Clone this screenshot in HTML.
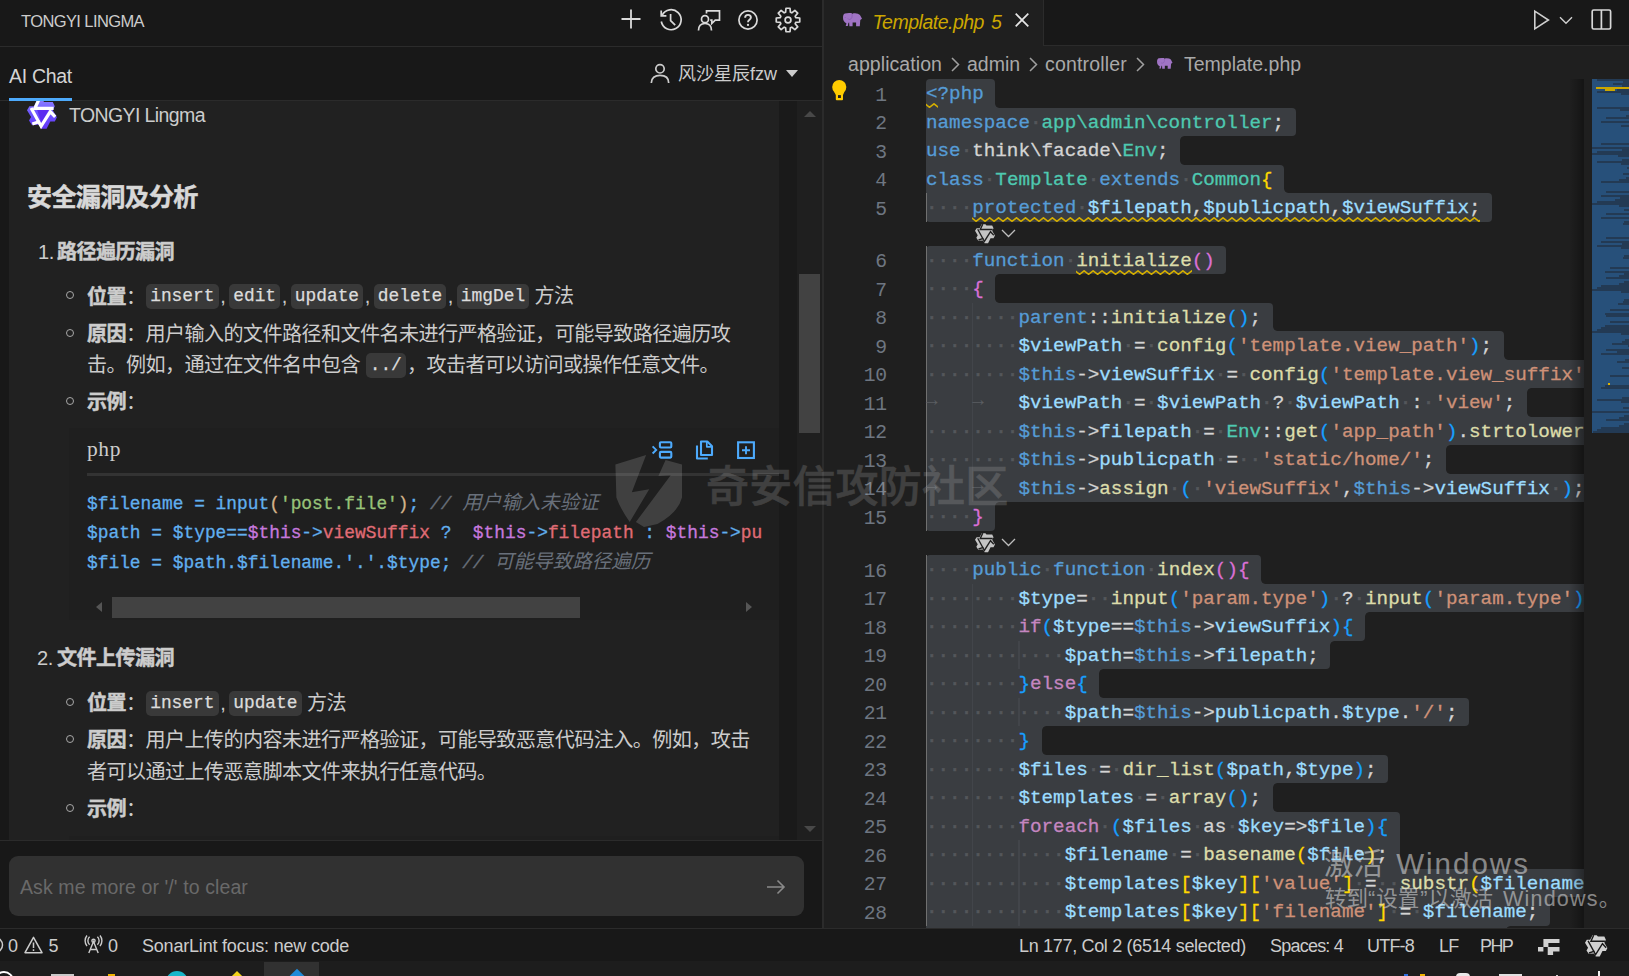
<!DOCTYPE html>
<html lang="zh-CN"><head><meta charset="utf-8"><title>Template.php - TONGYI Lingma</title>
<style>
*{box-sizing:border-box;margin:0;padding:0}
html,body{width:1629px;height:976px;overflow:hidden;background:#181818}
body{position:relative;font-family:"Liberation Sans","Noto Sans CJK SC",sans-serif;color:#cccccc;font-size:19.5px}
.abs{position:absolute}
.t{position:absolute;white-space:pre;line-height:1}
.mono{font-family:"Liberation Mono","DejaVu Sans Mono",monospace}
svg{position:absolute;overflow:visible}
/* left */
#left{position:absolute;left:0;top:0;width:822px;height:928px;background:#181818;overflow:hidden}
#chat{position:absolute;left:9px;top:101px;width:770px;height:739px;background:#212121;overflow:hidden}
#chat .t{color:#cccccc}
.b,#chat b{font-weight:bold;-webkit-text-stroke:0.45px currentColor}
.cj{font-family:"Liberation Sans","Noto Sans CJK SC",sans-serif;font-size:19.5px;-webkit-text-stroke:0;line-height:0}
.ic{position:absolute;background:#393939;border-radius:5px;height:25px;font-family:"Liberation Mono",monospace;font-size:17.87px;line-height:25px;padding:0 4.2px;white-space:pre;color:#dcdcdc;-webkit-text-stroke:0.25px currentColor}
.bul{position:absolute;width:8px;height:8px;border:1.1px solid #a8a8a8;border-radius:50%}
.cl{position:absolute;left:78px;white-space:pre;-webkit-text-stroke:0.3px currentColor;font-family:"Liberation Mono",monospace;font-size:17.87px;line-height:29.4px;height:29.4px}
/* editor */
#ed{position:absolute;left:824px;top:0;width:805px;height:928px;background:#1f1f1f;overflow:hidden}
#code{position:absolute;left:0;top:0;width:759.5px;height:928px;overflow:hidden}
.ln{position:absolute;left:0;width:62.8px;text-align:right;font-family:"Liberation Mono",monospace;font-size:19.7px;letter-spacing:-0.3px;line-height:28.5px;height:28.5px;color:#6e7681}
.row{position:absolute;left:102px;white-space:pre;-webkit-text-stroke:0.3px currentColor;font-family:"Liberation Mono",monospace;font-size:19.25px;line-height:28.5px;height:28.5px;color:#d4d4d4}
.sel{position:absolute;left:102px;height:28.5px;background:#3a3d41}
.ws{color:#54575b;-webkit-text-stroke:0.6px #54575b;position:relative;top:0}
.wa{color:#5b5e62;-webkit-text-stroke:0;position:relative;top:-2.5px}
.k{color:#569cd6}.c{color:#c586c0}.v{color:#9cdcfe}.s{color:#ce9178}.f{color:#dcdcaa}.y{color:#4ec9b0}
.b1{color:#ffd700}.b2{color:#da70d6}.b3{color:#179fff}
.sq{text-decoration:underline wavy #cca700 1.3px;text-underline-offset:4.5px;text-decoration-skip-ink:none}
.g{position:absolute;width:1.5px;background:#404040}
/* status */
#status{position:absolute;left:0;top:928px;width:1629px;height:34px;background:#181818;border-top:1px solid #2b2b2b;font-size:18px}
#status .t{color:#cccccc;top:7.6px}
#task{position:absolute;left:0;top:961px;width:1629px;height:15px;background:#1d1d1d;overflow:hidden}
</style></head>
<body>
<div id="left">
<div class="t " style="left:21px;top:12.5px;font-size:16.5px;letter-spacing:-0.6px;color:#cccccc">TONGYI LINGMA</div>
<svg style="left:619px;top:7.300000000000001px" width="24" height="24" viewBox="0 0 24 24"><path d="M12 2.5v19M2.5 12h19" stroke="#dadada" stroke-width="1.8" fill="none"/></svg>
<svg style="left:659px;top:8.3px" width="24" height="24" viewBox="0 0 24 24" fill="none" stroke="#dadada" stroke-width="1.7"><path d="M3.2 7.2A10 10 0 1 1 2.3 13.5"/><path d="M2.2 2.6v5.2h5.2"/><path d="M11.6 6v6.6l4.6 4.6"/></svg>
<svg style="left:697px;top:7.699999999999999px" width="24" height="24" viewBox="0 0 24 24" fill="none" stroke="#dadada" stroke-width="1.7"><path d="M9.5 5.5V2.8h13v9.4h-4.3l-3.4 3.3v-3.3h-1.6"/><circle cx="8" cy="11.2" r="3.5"/><path d="M1.5 22.5c0-4.6 2.6-7 6.5-7s6.5 2.4 6.5 7"/></svg>
<svg style="left:736px;top:7.600000000000001px" width="24" height="24" viewBox="0 0 24 24" fill="none" stroke="#dadada" stroke-width="1.7"><circle cx="12" cy="12" r="9.1"/><path d="M9.1 9.8c0-1.8 1.2-2.9 2.9-2.9s2.900 1.100 2.900 2.700c0 2.200-2.900 2.300-2.900 4.600" stroke-width="1.9"/><circle cx="12" cy="16.9" r="1.15" fill="#dadada" stroke="none"/></svg>
<svg style="left:776px;top:8px" width="24" height="24" viewBox="0 0 24 24" fill="none" stroke="#dadada" stroke-width="1.7" stroke-linejoin="round"><path d="M9.61 4.26 L9.99 0.27 L14.01 0.27 L14.39 4.26 L15.78 4.84 L18.87 2.28 L21.72 5.13 L19.16 8.22 L19.74 9.61 L23.73 9.99 L23.73 14.01 L19.74 14.39 L19.16 15.78 L21.72 18.87 L18.87 21.72 L15.78 19.16 L14.39 19.74 L14.01 23.73 L9.99 23.73 L9.61 19.74 L8.22 19.16 L5.13 21.72 L2.28 18.87 L4.84 15.78 L4.26 14.39 L0.27 14.01 L0.27 9.99 L4.26 9.61 L4.84 8.22 L2.28 5.13 L5.13 2.28 L8.22 4.84Z"/><circle cx="12" cy="12" r="2.9"/></svg>
<div class="abs" style="left:0;top:46px;width:822px;height:1px;background:#2b2b2b"></div>
<div class="t " style="left:9px;top:66.7px;letter-spacing:-0.3px;color:#d4d4d4">AI Chat</div>
<div class="abs" style="left:0;top:100px;width:822px;height:1px;background:#2b2b2b"></div>
<div class="abs" style="left:9px;top:98px;width:63px;height:3px;background:#4daafc"></div>
<svg style="left:649px;top:62px" width="22" height="22" viewBox="0 0 22 22" fill="none" stroke="#cccccc" stroke-width="1.7"><circle cx="11" cy="6.8" r="4.2"/><path d="M2.3 21c0-5.2 3.6-7.6 8.7-7.6s8.700 2.400 8.700 7.600"/></svg>
<div class="t " style="left:678px;top:65.4px;font-size:18px;color:#cccccc">风沙星辰fzw</div>
<div class="abs" style="left:786px;top:70px;width:0;height:0;border-left:6px solid transparent;border-right:6px solid transparent;border-top:7px solid #cccccc"></div>
<div class="abs" style="left:779px;top:101px;width:18px;height:739px;background:#1a1a1a"></div>
<div class="abs" style="left:797px;top:101px;width:25px;height:739px;background:#1f1f1f"></div>
<div class="abs" style="left:799px;top:274px;width:21px;height:159px;background:#424242"></div>
<div class="abs" style="left:803.5px;top:111px;width:0;height:0;border-left:6px solid transparent;border-right:6px solid transparent;border-bottom:6px solid #484848"></div>
<div class="abs" style="left:803.5px;top:826px;width:0;height:0;border-left:6px solid transparent;border-right:6px solid transparent;border-top:6px solid #484848"></div>
<div id="chat">
<svg style="left:18px;top:-1px" width="30" height="29.00" viewBox="0 0 30 29"><defs><linearGradient id="lg" x1="0" y1="0" x2="0" y2="1"><stop offset="0" stop-color="#8a7dff"/><stop offset=".45" stop-color="#6d55ff"/><stop offset="1" stop-color="#6236f5"/></linearGradient></defs><path d="M10.0 0.2L15.6 0.2L17.2 2.1L25.8 2.1L27.8 6.2L25.8 10.3L29.9 17.3L27.8 21.4L23.3 21.4L19.6 28.8L14.3 28.8L12.3 24.7L4.9 25.1L2.0 20.6L4.1 16.9L0 10.3L2.4 6.2L6.9 6.2Z" fill="url(#lg)"/><path d="M10 9.5L22 9.5L14.4 22.500Z" fill="#5b2cf0"/><path d="M11.6 0.2L7.9 8.3L26.6 8.3" stroke="#ffffff" stroke-width="3.2" fill="none" stroke-linejoin="miter"/><path d="M4.1 7.9L14.1 26.2L23.3 11.6L28.2 16.9" stroke="#ffffff" stroke-width="3.2" fill="none" stroke-linejoin="miter"/><path d="M5.3 24.0L12.6 21.6" stroke="#ffffff" stroke-width="3.2" fill="none" stroke-linejoin="miter"/></svg>
<div class="t " style="left:60px;top:4.799999999999997px;letter-spacing:-0.6px;color:#cccccc">TONGYI Lingma</div>
<div class="t b" style="left:18px;top:83.834px;font-size:25.13px;letter-spacing:-0.732px;color:#d8d8d8">安全漏洞及分析</div>
<div class="t " style="left:29px;top:141.0575px;font-size:20.09px;letter-spacing:-0.585px;letter-spacing:-0.5px">1.</div>
<div class="t b" style="left:48px;top:141.0575px;font-size:20.09px;letter-spacing:-0.585px;">路径遍历漏洞</div>
<div class="bul" style="left:56.5px;top:189.60000000000002px"></div>
<div class="t " style="left:78px;top:185.55749999999995px;font-size:20.09px;letter-spacing:-0.585px;"><b>位置</b>：</div>
<span class="ic" style="left:137px;top:182.5px">insert</span>
<div class="t " style="left:211.22000000000003px;top:184.85749999999996px;font-size:20.09px;letter-spacing:-0.585px;">,</div>
<span class="ic" style="left:220.02px;top:182.5px">edit</span>
<div class="t " style="left:272.8px;top:184.85749999999996px;font-size:20.09px;letter-spacing:-0.585px;">,</div>
<span class="ic" style="left:281.6px;top:182.5px">update</span>
<div class="t " style="left:355.82000000000005px;top:184.85749999999996px;font-size:20.09px;letter-spacing:-0.585px;">,</div>
<span class="ic" style="left:364.62px;top:182.5px">delete</span>
<div class="t " style="left:438.84000000000003px;top:184.85749999999996px;font-size:20.09px;letter-spacing:-0.585px;">,</div>
<span class="ic" style="left:447.64px;top:182.5px">imgDel</span>
<div class="t " style="left:525.5px;top:184.85749999999996px;font-size:20.09px;letter-spacing:-0.585px;">方法</div>
<div class="bul" style="left:56.5px;top:227.60000000000002px"></div>
<div class="t " style="left:78px;top:223.25749999999994px;font-size:20.09px;letter-spacing:-0.585px;"><b>原因</b>：用户输入的文件路径和文件名未进行严格验证，可能导致路径遍历攻</div>
<div class="t " style="left:78px;top:254.45749999999998px;font-size:20.09px;letter-spacing:-0.585px;">击。例如，通过在文件名中包含</div>
<span class="ic" style="left:356.5px;top:252px">../</span>
<div class="t " style="left:398px;top:254.45749999999998px;font-size:20.09px;letter-spacing:-0.585px;">，攻击者可以访问或操作任意文件。</div>
<div class="bul" style="left:56.5px;top:295.6px"></div>
<div class="t " style="left:78px;top:291.05749999999995px;font-size:20.09px;letter-spacing:-0.585px;"><b>示例</b>：</div>
<div class="abs" style="left:60px;top:327px;width:710px;height:192px;background:#1f1f1f">
<div class="t" style="left:18px;top:11px;font-family:'Liberation Serif',serif;font-size:21.5px;letter-spacing:0.6px;color:#cccccc">php</div>
<div class="abs" style="left:18px;top:45px;width:692px;height:2.5px;background:#333333"></div>
<svg style="left:0;top:0" width="710" height="60" viewBox="69 428 710 60" fill="none" stroke="#4daafc" stroke-width="2.1" stroke-linejoin="round"><path d="M652.6 446.3l3.600 3.600-3.600 3.600" stroke-width="1.900" stroke-linejoin="miter"/><rect x="659.900" y="442.300" width="11.400" height="5.200" rx="1"/><rect x="659.900" y="451.900" width="11.400" height="5.700" rx="1"/><path d="M701 441.500h6.300l4.700 4.700v8.800h-11z"/><path d="M706.800 441.800v5h5" stroke-width="1.700"/><path d="M697 445.500v13h10.800"/><rect x="738.100" y="442.300" width="15.800" height="15.700" stroke-linejoin="miter"/><path d="M746 446.200v8M742 450.200h8" stroke-width="1.900"/></svg>
<div class="abs" style="left:18px;top:61.8px;width:676px;height:100px;overflow:hidden">
<div class="cl" style="left:0;top:0.0px"><span style="color:#61afef">$filename = input</span><span style="color:#d4b38a">(</span><span style="color:#98c379">'post.file'</span><span style="color:#d4b38a">)</span><span style="color:#61afef">;</span> <span style="color:#686f7a;font-style:italic">// <span class="cj">用户输入未验证</span></span></div>
<div class="cl" style="left:0;top:29.4px"><span style="color:#61afef">$path = $type==</span><span style="color:#c678dd">$this</span><span style="color:#61afef">-&gt;</span><span style="color:#e06c75">viewSuffix</span><span style="color:#61afef"> ?  </span><span style="color:#c678dd">$this</span><span style="color:#61afef">-&gt;</span><span style="color:#e06c75">filepath</span><span style="color:#61afef"> : </span><span style="color:#c678dd">$this</span><span style="color:#61afef">-&gt;</span><span style="color:#e06c75">publicpath</span><span style="color:#61afef">.$type.'/';</span></div>
<div class="cl" style="left:0;top:58.8px"><span style="color:#61afef">$file = $path.$filename.'.'.$type;</span> <span style="color:#686f7a;font-style:italic">// <span class="cj">可能导致路径遍历</span></span></div>
</div>
<div class="abs" style="left:43px;top:169px;width:468px;height:21px;background:#424242"></div>
<div class="abs" style="left:27px;top:174px;width:0;height:0;border-top:5.5px solid transparent;border-bottom:5.500px solid transparent;border-right:6px solid #555"></div>
<div class="abs" style="left:677px;top:174px;width:0;height:0;border-top:5.5px solid transparent;border-bottom:5.500px solid transparent;border-left:6px solid #555"></div>
</div>
<div class="t " style="left:28px;top:546.8575px;font-size:20.09px;letter-spacing:-0.585px;letter-spacing:-0.5px">2.</div>
<div class="t b" style="left:48px;top:546.8575px;font-size:20.09px;letter-spacing:-0.585px;">文件上传漏洞</div>
<div class="bul" style="left:56.5px;top:596.6px"></div>
<div class="t " style="left:78px;top:591.8575px;font-size:20.09px;letter-spacing:-0.585px;"><b>位置</b>：</div>
<span class="ic" style="left:137px;top:589.5px">insert</span>
<div class="t " style="left:211.22000000000003px;top:591.8575px;font-size:20.09px;letter-spacing:-0.585px;">,</div>
<span class="ic" style="left:220.02px;top:589.5px">update</span>
<div class="t " style="left:298px;top:591.8575px;font-size:20.09px;letter-spacing:-0.585px;">方法</div>
<div class="bul" style="left:56.5px;top:633.6px"></div>
<div class="t " style="left:78px;top:629.2574999999999px;font-size:20.09px;letter-spacing:-0.585px;"><b>原因</b>：用户上传的内容未进行严格验证，可能导致恶意代码注入。例如，攻击</div>
<div class="t " style="left:78px;top:660.6574999999999px;font-size:20.09px;letter-spacing:-0.585px;">者可以通过上传恶意脚本文件来执行任意代码。</div>
<div class="bul" style="left:56.5px;top:702.6px"></div>
<div class="t " style="left:78px;top:698.0575px;font-size:20.09px;letter-spacing:-0.585px;"><b>示例</b>：</div>
<div class="abs" style="left:60px;top:735px;width:710px;height:20px;background:#1f1f1f"></div>
</div>
<div class="abs" style="left:0;top:840px;width:822px;height:1px;background:#2b2b2b"></div>
<div class="abs" style="left:9px;top:856px;width:795px;height:60px;background:#313131;border-radius:9px"></div>
<div class="t " style="left:20px;top:878.3px;color:#696969;letter-spacing:0.1px">Ask me more or '/' to clear</div>
<svg style="left:765px;top:876px" width="22" height="22" viewBox="0 0 22 22" fill="none" stroke="#8a8a8a" stroke-width="1.6"><path d="M2 11h17M12.500 4.500l6.500 6.500-6.500 6.500"/></svg>
</div>
<div id="ed">
<div class="abs" style="left:0;top:0;width:805px;height:46px;background:#181818;border-bottom:1px solid #2b2b2b"></div>
<div class="abs" style="left:0;top:0;width:220px;height:46px;background:#1f1f1f;border-right:1px solid #2b2b2b"></div>
<svg style="left:19.3px;top:12.8px" width="19.1" height="13.4" viewBox="0 0 19.1 13.4"><path d="M1.9 .4Q5-.3 8.500 .1L9.100 .9Q9.800 .3 10.700 .3 13 0 14.900 .7 17.500 1.800 18.100 3.900L19 5.700 17.300 7 16.800 13.200H13.100V9.500H9.600V13.200H6.400L6.100 9.200 5.300 10.300 4.800 12.900H2.700L3.500 10.500Q1.500 9.500 .8 8.100 0 6.500 0 4.700 0 2.500 .5 1.700 1 .7 1.900 .4Z" fill="#a074c4"/><path d="M9.100 .9Q9.400 3 8.800 4.700 7.800 6.700 6.400 6.500 5.300 6.300 4.800 5.500" stroke="#7a4fa6" stroke-width=".5" fill="none"/><circle cx="2.200" cy="4.600" r=".5" fill="#8a5db4"/></svg>
<div class="t" style="left:48.5px;top:13.1px;font-size:19.5px;font-style:italic;color:#cca700;letter-spacing:-0.5px">Template.php<span style="letter-spacing:0;margin-left:7px">5</span></div>
<svg style="left:191px;top:13px" width="14" height="14" viewBox="0 0 14 14"><path d="M.7 .7l12.600 12.600M13.300 .7L.7 13.300" stroke="#e6e6e6" stroke-width="1.7" fill="none"/></svg>
<svg style="left:709px;top:9px" width="20" height="22" viewBox="0 0 20 22"><path d="M1.800 2.200v17.600l13.600-8.800z" stroke="#d0d0d0" stroke-width="1.600" fill="none" stroke-linejoin="miter"/></svg>
<svg style="left:735px;top:16px" width="14" height="9" viewBox="0 0 14 9"><path d="M1 1.200l6 6 6-6" stroke="#d0d0d0" stroke-width="1.400" fill="none"/></svg>
<svg style="left:767px;top:9px" width="21" height="21" viewBox="0 0 21 21"><rect x="1.200" y="1" width="18.400" height="19" rx="1.500" stroke="#d8d8d8" stroke-width="1.700" fill="none"/><path d="M10.400 1v19" stroke="#d8d8d8" stroke-width="1.700"/></svg>
<div class="t " style="left:24px;top:54.7px;color:#a9a9a9;letter-spacing:0.07px">application</div>
<svg style="left:127px;top:56.5px" width="9" height="15" viewBox="0 0 9 15"><path d="M1 1l6.500 6.500L1 14" stroke="#a0a0a0" stroke-width="1.500" fill="none"/></svg>
<div class="t " style="left:143px;top:54.7px;color:#a9a9a9;">admin</div>
<svg style="left:205px;top:56.5px" width="9" height="15" viewBox="0 0 9 15"><path d="M1 1l6.500 6.500L1 14" stroke="#a0a0a0" stroke-width="1.500" fill="none"/></svg>
<div class="t " style="left:221px;top:54.7px;color:#a9a9a9;letter-spacing:0.18px">controller</div>
<svg style="left:312px;top:56.5px" width="9" height="15" viewBox="0 0 9 15"><path d="M1 1l6.500 6.500L1 14" stroke="#a0a0a0" stroke-width="1.500" fill="none"/></svg>
<svg style="left:332.79999999999995px;top:58px" width="15.6" height="10.9" viewBox="0 0 19.1 13.4"><path d="M1.9 .4Q5-.3 8.500 .1L9.100 .9Q9.800 .3 10.700 .3 13 0 14.900 .7 17.500 1.800 18.100 3.900L19 5.700 17.300 7 16.800 13.200H13.100V9.500H9.600V13.200H6.400L6.100 9.200 5.300 10.300 4.800 12.900H2.700L3.500 10.500Q1.500 9.500 .8 8.100 0 6.500 0 4.700 0 2.500 .5 1.700 1 .7 1.900 .4Z" fill="#a074c4"/><path d="M9.100 .9Q9.400 3 8.800 4.700 7.800 6.700 6.400 6.500 5.300 6.300 4.800 5.500" stroke="#7a4fa6" stroke-width=".5" fill="none"/><circle cx="2.200" cy="4.600" r=".5" fill="#8a5db4"/></svg>
<div class="t " style="left:360px;top:54.7px;color:#a9a9a9;">Template.php</div>
<div id="code">
<div class="sel" style="top:79.0px;width:69.3px;border-radius:4px 4px 0px 0px"></div>
<div class="sel" style="top:107.5px;width:369.7px;border-radius:0px 4px 4px 0px"></div>
<div class="sel" style="top:136.0px;width:254.1px;border-radius:0px 0px 0px 0px"></div>
<div class="sel" style="top:164.5px;width:358.1px;border-radius:0px 4px 0px 0px"></div>
<div class="sel" style="top:193.0px;width:566.0px;border-radius:0px 4px 4px 4px"></div>
<div class="sel" style="top:245.75px;width:300.4px;border-radius:4px 4px 4px 0px"></div>
<div class="sel" style="top:274.25px;width:69.3px;border-radius:0px 0px 0px 0px"></div>
<div class="sel" style="top:302.75px;width:346.6px;border-radius:0px 4px 0px 0px"></div>
<div class="sel" style="top:331.25px;width:577.6px;border-radius:0px 4px 0px 0px"></div>
<div class="sel" style="top:359.75px;width:667.5px;border-radius:0px 4px 4px 0px"></div>
<div class="sel" style="top:388.25px;width:600.7px;border-radius:0px 0px 0px 0px"></div>
<div class="sel" style="top:416.75px;width:667.5px;border-radius:0px 4px 4px 0px"></div>
<div class="sel" style="top:445.25px;width:519.8px;border-radius:0px 0px 0px 0px"></div>
<div class="sel" style="top:473.75px;width:667.5px;border-radius:0px 4px 4px 0px"></div>
<div class="sel" style="top:502.25px;width:69.3px;border-radius:0px 0px 4px 4px"></div>
<div class="sel" style="top:555.0px;width:335.0px;border-radius:4px 4px 0px 0px"></div>
<div class="sel" style="top:583.5px;width:667.5px;border-radius:0px 4px 4px 0px"></div>
<div class="sel" style="top:612.0px;width:439.0px;border-radius:0px 0px 4px 0px"></div>
<div class="sel" style="top:640.5px;width:404.3px;border-radius:0px 0px 4px 0px"></div>
<div class="sel" style="top:669.0px;width:173.3px;border-radius:0px 0px 0px 0px"></div>
<div class="sel" style="top:697.5px;width:542.9px;border-radius:0px 4px 4px 0px"></div>
<div class="sel" style="top:726.0px;width:115.5px;border-radius:0px 0px 0px 0px"></div>
<div class="sel" style="top:754.5px;width:462.1px;border-radius:0px 4px 4px 0px"></div>
<div class="sel" style="top:783.0px;width:346.6px;border-radius:0px 0px 0px 0px"></div>
<div class="sel" style="top:811.5px;width:473.6px;border-radius:0px 4px 0px 0px"></div>
<div class="sel" style="top:840.0px;width:473.6px;border-radius:0px 0px 0px 0px"></div>
<div class="sel" style="top:868.5px;width:667.5px;border-radius:0px 4px 4px 0px"></div>
<div class="sel" style="top:897.0px;width:623.8px;border-radius:0px 0px 4px 0px"></div>
<div class="abs" style="left:171.3px;top:103.50px;width:4px;height:4px;background:radial-gradient(circle at 100% 0,rgba(58,61,65,0) 3.4px,#3a3d41 4.1px)"></div>
<div class="abs" style="left:356.1px;top:136.00px;width:4px;height:4px;background:radial-gradient(circle at 100% 100%,rgba(58,61,65,0) 3.4px,#3a3d41 4.1px)"></div>
<div class="abs" style="left:356.1px;top:160.50px;width:4px;height:4px;background:radial-gradient(circle at 100% 0,rgba(58,61,65,0) 3.4px,#3a3d41 4.1px)"></div>
<div class="abs" style="left:460.1px;top:189.00px;width:4px;height:4px;background:radial-gradient(circle at 100% 0,rgba(58,61,65,0) 3.4px,#3a3d41 4.1px)"></div>
<div class="abs" style="left:171.3px;top:274.25px;width:4px;height:4px;background:radial-gradient(circle at 100% 100%,rgba(58,61,65,0) 3.4px,#3a3d41 4.1px)"></div>
<div class="abs" style="left:171.3px;top:298.75px;width:4px;height:4px;background:radial-gradient(circle at 100% 0,rgba(58,61,65,0) 3.4px,#3a3d41 4.1px)"></div>
<div class="abs" style="left:448.6px;top:327.25px;width:4px;height:4px;background:radial-gradient(circle at 100% 0,rgba(58,61,65,0) 3.4px,#3a3d41 4.1px)"></div>
<div class="abs" style="left:679.6px;top:355.75px;width:4px;height:4px;background:radial-gradient(circle at 100% 0,rgba(58,61,65,0) 3.4px,#3a3d41 4.1px)"></div>
<div class="abs" style="left:702.7px;top:388.25px;width:4px;height:4px;background:radial-gradient(circle at 100% 100%,rgba(58,61,65,0) 3.4px,#3a3d41 4.1px)"></div>
<div class="abs" style="left:702.7px;top:412.75px;width:4px;height:4px;background:radial-gradient(circle at 100% 0,rgba(58,61,65,0) 3.4px,#3a3d41 4.1px)"></div>
<div class="abs" style="left:621.8px;top:445.25px;width:4px;height:4px;background:radial-gradient(circle at 100% 100%,rgba(58,61,65,0) 3.4px,#3a3d41 4.1px)"></div>
<div class="abs" style="left:621.8px;top:469.75px;width:4px;height:4px;background:radial-gradient(circle at 100% 0,rgba(58,61,65,0) 3.4px,#3a3d41 4.1px)"></div>
<div class="abs" style="left:171.3px;top:502.25px;width:4px;height:4px;background:radial-gradient(circle at 100% 100%,rgba(58,61,65,0) 3.4px,#3a3d41 4.1px)"></div>
<div class="abs" style="left:437.0px;top:579.50px;width:4px;height:4px;background:radial-gradient(circle at 100% 0,rgba(58,61,65,0) 3.4px,#3a3d41 4.1px)"></div>
<div class="abs" style="left:541.0px;top:612.00px;width:4px;height:4px;background:radial-gradient(circle at 100% 100%,rgba(58,61,65,0) 3.4px,#3a3d41 4.1px)"></div>
<div class="abs" style="left:506.3px;top:640.50px;width:4px;height:4px;background:radial-gradient(circle at 100% 100%,rgba(58,61,65,0) 3.4px,#3a3d41 4.1px)"></div>
<div class="abs" style="left:275.3px;top:669.00px;width:4px;height:4px;background:radial-gradient(circle at 100% 100%,rgba(58,61,65,0) 3.4px,#3a3d41 4.1px)"></div>
<div class="abs" style="left:275.3px;top:693.50px;width:4px;height:4px;background:radial-gradient(circle at 100% 0,rgba(58,61,65,0) 3.4px,#3a3d41 4.1px)"></div>
<div class="abs" style="left:217.5px;top:726.00px;width:4px;height:4px;background:radial-gradient(circle at 100% 100%,rgba(58,61,65,0) 3.4px,#3a3d41 4.1px)"></div>
<div class="abs" style="left:217.5px;top:750.50px;width:4px;height:4px;background:radial-gradient(circle at 100% 0,rgba(58,61,65,0) 3.4px,#3a3d41 4.1px)"></div>
<div class="abs" style="left:448.6px;top:783.00px;width:4px;height:4px;background:radial-gradient(circle at 100% 100%,rgba(58,61,65,0) 3.4px,#3a3d41 4.1px)"></div>
<div class="abs" style="left:448.6px;top:807.50px;width:4px;height:4px;background:radial-gradient(circle at 100% 0,rgba(58,61,65,0) 3.4px,#3a3d41 4.1px)"></div>
<div class="abs" style="left:575.6px;top:864.50px;width:4px;height:4px;background:radial-gradient(circle at 100% 0,rgba(58,61,65,0) 3.4px,#3a3d41 4.1px)"></div>
<div class="abs" style="left:725.8px;top:897.00px;width:4px;height:4px;background:radial-gradient(circle at 100% 100%,rgba(58,61,65,0) 3.4px,#3a3d41 4.1px)"></div>
<div class="sel" style="top:925.5px;width:579.9px"></div>
<div class="abs" style="left:681.9px;top:925.50px;width:4px;height:4px;background:radial-gradient(circle at 100% 100%,rgba(58,61,65,0) 3.4px,#3a3d41 4.1px)"></div>
<div class="g" style="left:101.7px;top:193.0px;height:28.5px;background:#707070"></div>
<div class="g" style="left:101.7px;top:245.75px;height:285.0px;background:#707070"></div>
<div class="g" style="left:101.7px;top:555.0px;height:370.5px;background:#707070"></div>
<div class="g" style="left:147.9px;top:302.75px;height:199.5px;background:#42454a"></div>
<div class="g" style="left:147.9px;top:583.5px;height:342.0px;background:#42454a"></div>
<div class="g" style="left:194.1px;top:640.5px;height:28.5px;background:#42454a"></div>
<div class="g" style="left:194.1px;top:697.5px;height:28.5px;background:#42454a"></div>
<div class="g" style="left:194.1px;top:840.0px;height:85.5px;background:#42454a"></div>
<div class="row" style="top:80.0px"><span class="k">&lt;?php</span></div>
<div class="row" style="top:108.5px"><span class="k">namespace</span><span class="ws">·</span><span class="y">app\admin\controller</span>;</div>
<div class="row" style="top:137.0px"><span class="k">use</span><span class="ws">·</span>think\facade\<span class="y">Env</span>;</div>
<div class="row" style="top:165.5px"><span class="k">class</span><span class="ws">·</span><span class="y">Template</span><span class="ws">·</span><span class="k">extends</span><span class="ws">·</span><span class="y">Common</span><span class="b1">{</span></div>
<div class="row" style="top:194.0px"><span class="ws">····</span><span class="k">protected</span><span class="ws">·</span><span class="v">$filepath</span>,<span class="v">$publicpath</span>,<span class="v">$viewSuffix</span>;</div>
<div class="row" style="top:246.75px"><span class="ws">····</span><span class="k">function</span><span class="ws">·</span><span class="f">initialize</span><span class="b2">()</span></div>
<div class="row" style="top:275.25px"><span class="ws">····</span><span class="b2">{</span></div>
<div class="row" style="top:303.75px"><span class="ws">········</span><span class="k">parent</span>::<span class="f">initialize</span><span class="b3">()</span>;</div>
<div class="row" style="top:332.25px"><span class="ws">········</span><span class="v">$viewPath</span><span class="ws">·</span>=<span class="ws">·</span><span class="f">config</span><span class="b3">(</span><span class="s">'template.view_path'</span><span class="b3">)</span>;</div>
<div class="row" style="top:360.75px"><span class="ws">········</span><span class="k">$this</span>-&gt;<span class="v">viewSuffix</span><span class="ws">·</span>=<span class="ws">·</span><span class="f">config</span><span class="b3">(</span><span class="s">'template.view_suffix'</span><span class="b3">)</span>;</div>
<div class="row" style="top:389.25px"><span class="wa">→</span>   <span class="wa">→</span>   <span class="v">$viewPath</span><span class="ws">·</span>=<span class="ws">·</span><span class="v">$viewPath</span><span class="ws">·</span>?<span class="ws">·</span><span class="v">$viewPath</span><span class="ws">·</span>:<span class="ws">·</span><span class="s">'view'</span>;</div>
<div class="row" style="top:417.75px"><span class="ws">········</span><span class="k">$this</span>-&gt;<span class="v">filepath</span><span class="ws">·</span>=<span class="ws">·</span><span class="y">Env</span>::<span class="f">get</span><span class="b3">(</span><span class="s">'app_path'</span><span class="b3">)</span>.<span class="f">strtolower</span><span class="b3">(</span><span class="v">$viewPath</span><span class="b3">)</span>;</div>
<div class="row" style="top:446.25px"><span class="ws">········</span><span class="k">$this</span>-&gt;<span class="v">publicpath</span><span class="ws">·</span>=<span class="ws">··</span><span class="s">'static/home/'</span>;</div>
<div class="row" style="top:474.75px"><span class="wa">→</span>   <span class="wa">→</span>   <span class="k">$this</span>-&gt;<span class="f">assign</span><span class="ws">·</span><span class="b3">(</span><span class="ws">·</span><span class="s">'viewSuffix'</span>,<span class="k">$this</span>-&gt;<span class="v">viewSuffix</span><span class="ws">·</span><span class="b3">)</span>;</div>
<div class="row" style="top:503.25px"><span class="ws">····</span><span class="b2">}</span></div>
<div class="row" style="top:556.0px"><span class="ws">····</span><span class="k">public</span><span class="ws">·</span><span class="k">function</span><span class="ws">·</span><span class="f">index</span><span class="b2">()</span><span class="b2">{</span></div>
<div class="row" style="top:584.5px"><span class="ws">········</span><span class="v">$type</span>=<span class="ws">··</span><span class="f">input</span><span class="b3">(</span><span class="s">'param.type'</span><span class="b3">)</span><span class="ws">·</span>?<span class="ws">·</span><span class="f">input</span><span class="b3">(</span><span class="s">'param.type'</span><span class="b3">)</span><span class="ws">·</span>:<span class="ws">·</span><span class="s">'html'</span>;</div>
<div class="row" style="top:613.0px"><span class="ws">········</span><span class="c">if</span><span class="b3">(</span><span class="v">$type</span>==<span class="k">$this</span>-&gt;<span class="v">viewSuffix</span><span class="b3">)</span><span class="b3">{</span></div>
<div class="row" style="top:641.5px"><span class="ws">············</span><span class="v">$path</span>=<span class="k">$this</span>-&gt;<span class="v">filepath</span>;</div>
<div class="row" style="top:670.0px"><span class="ws">········</span><span class="b3">}</span><span class="c">else</span><span class="b3">{</span></div>
<div class="row" style="top:698.5px"><span class="ws">············</span><span class="v">$path</span>=<span class="k">$this</span>-&gt;<span class="v">publicpath</span>.<span class="v">$type</span>.<span class="s">'/'</span>;</div>
<div class="row" style="top:727.0px"><span class="ws">········</span><span class="b3">}</span></div>
<div class="row" style="top:755.5px"><span class="ws">········</span><span class="v">$files</span><span class="ws">·</span>=<span class="ws">·</span><span class="f">dir_list</span><span class="b3">(</span><span class="v">$path</span>,<span class="v">$type</span><span class="b3">)</span>;</div>
<div class="row" style="top:784.0px"><span class="ws">········</span><span class="v">$templates</span><span class="ws">·</span>=<span class="ws">·</span><span class="f">array</span><span class="b3">()</span>;</div>
<div class="row" style="top:812.5px"><span class="ws">········</span><span class="c">foreach</span><span class="ws">·</span><span class="b3">(</span><span class="v">$files</span><span class="ws">·</span>as<span class="ws">·</span><span class="v">$key</span>=&gt;<span class="v">$file</span><span class="b3">)</span><span class="b3">{</span></div>
<div class="row" style="top:841.0px"><span class="ws">············</span><span class="v">$filename</span><span class="ws">·</span>=<span class="ws">·</span><span class="f">basename</span><span class="b1">(</span><span class="v">$file</span><span class="b1">)</span>;</div>
<div class="row" style="top:869.5px"><span class="ws">············</span><span class="v">$templates</span><span class="b1">[</span><span class="v">$key</span><span class="b1">]</span><span class="b1">[</span><span class="s">'value'</span><span class="b1">]</span><span class="ws">·</span>=<span class="ws">··</span><span class="f">substr</span><span class="b1">(</span><span class="v">$filename</span>,<span class="n">0</span>,<span class="f">strrpos</span><span class="b2">(</span><span class="v">$filename</span></div>
<div class="row" style="top:898.0px"><span class="ws">············</span><span class="v">$templates</span><span class="b1">[</span><span class="v">$key</span><span class="b1">]</span><span class="b1">[</span><span class="s">'filename'</span><span class="b1">]</span><span class="ws">·</span>=<span class="ws">·</span><span class="v">$filename</span>;</div>
<svg style="left:102.0px;top:102.8px;overflow:hidden" width="11.6" height="5.2" viewBox="0 0 11.6 5.2"><path d="M-1 0.8L3.5 4.3L8.0 0.8L12.5 4.3L17.0 0.8" stroke="#d4ae00" stroke-width="1.6" fill="none"/></svg>
<svg style="left:148.2px;top:216.8px;overflow:hidden" width="508.3" height="5.2" viewBox="0 0 508.3 5.2"><path d="M-1 0.8L3.5 4.3L8.0 0.8L12.5 4.3L17.0 0.8L21.5 4.3L26.0 0.8L30.5 4.3L35.0 0.8L39.5 4.3L44.0 0.8L48.5 4.3L53.0 0.8L57.5 4.3L62.0 0.8L66.5 4.3L71.0 0.8L75.5 4.3L80.0 0.8L84.5 4.3L89.0 0.8L93.5 4.3L98.0 0.8L102.5 4.3L107.0 0.8L111.5 4.3L116.0 0.8L120.5 4.3L125.0 0.8L129.5 4.3L134.0 0.8L138.5 4.3L143.0 0.8L147.5 4.3L152.0 0.8L156.5 4.3L161.0 0.8L165.5 4.3L170.0 0.8L174.5 4.3L179.0 0.8L183.5 4.3L188.0 0.8L192.5 4.3L197.0 0.8L201.5 4.3L206.0 0.8L210.5 4.3L215.0 0.8L219.5 4.3L224.0 0.8L228.5 4.3L233.0 0.8L237.5 4.3L242.0 0.8L246.5 4.3L251.0 0.8L255.5 4.3L260.0 0.8L264.5 4.3L269.0 0.8L273.5 4.3L278.0 0.8L282.5 4.3L287.0 0.8L291.5 4.3L296.0 0.8L300.5 4.3L305.0 0.8L309.5 4.3L314.0 0.8L318.5 4.3L323.0 0.8L327.5 4.3L332.0 0.8L336.5 4.3L341.0 0.8L345.5 4.3L350.0 0.8L354.5 4.3L359.0 0.8L363.5 4.3L368.0 0.8L372.5 4.3L377.0 0.8L381.5 4.3L386.0 0.8L390.5 4.3L395.0 0.8L399.5 4.3L404.0 0.8L408.5 4.3L413.0 0.8L417.5 4.3L422.0 0.8L426.5 4.3L431.0 0.8L435.5 4.3L440.0 0.8L444.5 4.3L449.0 0.8L453.5 4.3L458.0 0.8L462.5 4.3L467.0 0.8L471.5 4.3L476.0 0.8L480.5 4.3L485.0 0.8L489.5 4.3L494.0 0.8L498.5 4.3L503.0 0.8L507.5 4.3L512.0 0.8L516.5 4.3" stroke="#d4ae00" stroke-width="1.6" fill="none"/></svg>
<svg style="left:252.2px;top:269.6px;overflow:hidden" width="115.5" height="5.2" viewBox="0 0 115.5 5.2"><path d="M-1 0.8L3.5 4.3L8.0 0.8L12.5 4.3L17.0 0.8L21.5 4.3L26.0 0.8L30.5 4.3L35.0 0.8L39.5 4.3L44.0 0.8L48.5 4.3L53.0 0.8L57.5 4.3L62.0 0.8L66.5 4.3L71.0 0.8L75.5 4.3L80.0 0.8L84.5 4.3L89.0 0.8L93.5 4.3L98.0 0.8L102.5 4.3L107.0 0.8L111.5 4.3L116.0 0.8L120.5 4.3L125.0 0.8" stroke="#d4ae00" stroke-width="1.6" fill="none"/></svg>
<div class="ln" style="top:81.6px">1</div>
<div class="ln" style="top:110.1px">2</div>
<div class="ln" style="top:138.6px">3</div>
<div class="ln" style="top:167.1px">4</div>
<div class="ln" style="top:195.6px">5</div>
<div class="ln" style="top:248.35px">6</div>
<div class="ln" style="top:276.85px">7</div>
<div class="ln" style="top:305.35px">8</div>
<div class="ln" style="top:333.85px">9</div>
<div class="ln" style="top:362.35px">10</div>
<div class="ln" style="top:390.85px">11</div>
<div class="ln" style="top:419.35px">12</div>
<div class="ln" style="top:447.85px">13</div>
<div class="ln" style="top:476.35px">14</div>
<div class="ln" style="top:504.85px">15</div>
<div class="ln" style="top:557.6px">16</div>
<div class="ln" style="top:586.1px">17</div>
<div class="ln" style="top:614.6px">18</div>
<div class="ln" style="top:643.1px">19</div>
<div class="ln" style="top:671.6px">20</div>
<div class="ln" style="top:700.1px">21</div>
<div class="ln" style="top:728.6px">22</div>
<div class="ln" style="top:757.1px">23</div>
<div class="ln" style="top:785.6px">24</div>
<div class="ln" style="top:814.1px">25</div>
<div class="ln" style="top:842.6px">26</div>
<div class="ln" style="top:871.1px">27</div>
<div class="ln" style="top:899.6px">28</div>
<svg style="left:150.5px;top:223.5px" width="20" height="19.33" viewBox="0 0 30 29"><path d="M10.0 0.2L15.6 0.2L17.2 2.1L25.8 2.1L27.8 6.2L25.8 10.3L29.9 17.3L27.8 21.4L23.3 21.4L19.6 28.8L14.3 28.8L12.3 24.7L4.9 25.1L2.0 20.6L4.1 16.9L0 10.3L2.4 6.2L6.9 6.2Z" fill="#c4c4c4"/><path d="M11.6 0.2L7.9 8.3L26.6 8.3" stroke="#1f1f1f" stroke-width="2.1" fill="none" stroke-linejoin="miter"/><path d="M4.1 7.9L14.1 26.2L23.3 11.6L28.2 16.9" stroke="#1f1f1f" stroke-width="2.1" fill="none" stroke-linejoin="miter"/><path d="M5.3 24.0L12.6 21.6" stroke="#1f1f1f" stroke-width="2.1" fill="none" stroke-linejoin="miter"/></svg>
<svg style="left:176.60000000000002px;top:229.1px" width="15" height="9" viewBox="0 0 15 9"><path d="M1 1l6.500 6.500L14 1" stroke="#bdbdbd" stroke-width="1.300" fill="none"/></svg>
<svg style="left:150.5px;top:532.75px" width="20" height="19.33" viewBox="0 0 30 29"><path d="M10.0 0.2L15.6 0.2L17.2 2.1L25.8 2.1L27.8 6.2L25.8 10.3L29.9 17.3L27.8 21.4L23.3 21.4L19.6 28.8L14.3 28.8L12.3 24.7L4.9 25.1L2.0 20.6L4.1 16.9L0 10.3L2.4 6.2L6.9 6.2Z" fill="#c4c4c4"/><path d="M11.6 0.2L7.9 8.3L26.6 8.3" stroke="#1f1f1f" stroke-width="2.1" fill="none" stroke-linejoin="miter"/><path d="M4.1 7.9L14.1 26.2L23.3 11.6L28.2 16.9" stroke="#1f1f1f" stroke-width="2.1" fill="none" stroke-linejoin="miter"/><path d="M5.3 24.0L12.6 21.6" stroke="#1f1f1f" stroke-width="2.1" fill="none" stroke-linejoin="miter"/></svg>
<svg style="left:176.60000000000002px;top:538.35px" width="15" height="9" viewBox="0 0 15 9"><path d="M1 1l6.500 6.500L14 1" stroke="#bdbdbd" stroke-width="1.300" fill="none"/></svg>
</div>
<svg style="left:0;top:0" width="40" height="110" viewBox="824 0 40 110"><circle cx="839.250" cy="87.050" r="7.050" fill="#ffcc00"/><path d="M834 91.500L835.800 95V99.300Q835.800 100.200 836.700 100.200H842.100Q843 100.200 843 99.300V95L844.500 91.500Z" fill="#ffcc00"/><rect x="838" y="95.100" width="2.900" height="2.900" fill="#1f1f1f"/></svg>
<div class="abs" style="left:745px;top:79px;width:15px;height:849px;background:linear-gradient(to right,rgba(0,0,0,0),rgba(0,0,0,.35))"></div>
<div class="abs" style="left:768px;top:79px;width:37px;height:354px;background:#233a54;overflow:hidden"><i style="position:absolute;left:0;top:0px;width:5px;height:2px;background:#27507a"></i><i style="position:absolute;left:0;top:2px;width:31px;height:2px;background:#27507a"></i><i style="position:absolute;left:0;top:4px;width:21px;height:2px;background:#27507a"></i><i style="position:absolute;left:0;top:6px;width:30px;height:2px;background:#27507a"></i><i style="position:absolute;left:0;top:8px;width:37px;height:2px;background:#27507a"></i><i style="position:absolute;left:0;top:10px;width:25px;height:2px;background:#27507a"></i><i style="position:absolute;left:0;top:12px;width:5px;height:2px;background:#27507a"></i><i style="position:absolute;left:0;top:14px;width:29px;height:2px;background:#27507a"></i><i style="position:absolute;left:0;top:16px;width:37px;height:2px;background:#27507a"></i><i style="position:absolute;left:0;top:18px;width:37px;height:2px;background:#27507a"></i><i style="position:absolute;left:0;top:20px;width:37px;height:2px;background:#27507a"></i><i style="position:absolute;left:0;top:22px;width:37px;height:2px;background:#27507a"></i><i style="position:absolute;left:0;top:24px;width:37px;height:2px;background:#27507a"></i><i style="position:absolute;left:0;top:26px;width:37px;height:2px;background:#27507a"></i><i style="position:absolute;left:0;top:28px;width:5px;height:2px;background:#27507a"></i><i style="position:absolute;left:0;top:30px;width:28px;height:2px;background:#27507a"></i><i style="position:absolute;left:0;top:32px;width:37px;height:2px;background:#27507a"></i><i style="position:absolute;left:0;top:34px;width:37px;height:2px;background:#27507a"></i><i style="position:absolute;left:0;top:36px;width:34px;height:2px;background:#27507a"></i><i style="position:absolute;left:0;top:38px;width:14px;height:2px;background:#27507a"></i><i style="position:absolute;left:0;top:40px;width:37px;height:2px;background:#27507a"></i><i style="position:absolute;left:0;top:42px;width:9px;height:2px;background:#27507a"></i><i style="position:absolute;left:0;top:44px;width:37px;height:2px;background:#27507a"></i><i style="position:absolute;left:0;top:46px;width:29px;height:2px;background:#27507a"></i><i style="position:absolute;left:0;top:48px;width:37px;height:2px;background:#27507a"></i><i style="position:absolute;left:0;top:50px;width:37px;height:2px;background:#27507a"></i><i style="position:absolute;left:0;top:52px;width:37px;height:2px;background:#27507a"></i><i style="position:absolute;left:0;top:54px;width:37px;height:2px;background:#27507a"></i><i style="position:absolute;left:0;top:56px;width:37px;height:2px;background:#27507a"></i><i style="position:absolute;left:0;top:58px;width:37px;height:2px;background:#27507a"></i><i style="position:absolute;left:0;top:60px;width:37px;height:2px;background:#27507a"></i><i style="position:absolute;left:0;top:62px;width:37px;height:2px;background:#27507a"></i><i style="position:absolute;left:0;top:64px;width:9px;height:2px;background:#27507a"></i><i style="position:absolute;left:0;top:66px;width:37px;height:2px;background:#27507a"></i><i style="position:absolute;left:0;top:70px;width:30px;height:2px;background:#27507a"></i><i style="position:absolute;left:0;top:72px;width:5px;height:2px;background:#27507a"></i><i style="position:absolute;left:0;top:76px;width:26px;height:2px;background:#27507a"></i><i style="position:absolute;left:0;top:78px;width:37px;height:2px;background:#27507a"></i><i style="position:absolute;left:0;top:80px;width:30px;height:2px;background:#27507a"></i><i style="position:absolute;left:0;top:82px;width:5px;height:2px;background:#27507a"></i><i style="position:absolute;left:0;top:84px;width:29px;height:2px;background:#27507a"></i><i style="position:absolute;left:0;top:86px;width:37px;height:2px;background:#27507a"></i><i style="position:absolute;left:0;top:88px;width:35px;height:2px;background:#27507a"></i><i style="position:absolute;left:0;top:90px;width:37px;height:2px;background:#27507a"></i><i style="position:absolute;left:0;top:92px;width:37px;height:2px;background:#27507a"></i><i style="position:absolute;left:0;top:94px;width:31px;height:2px;background:#27507a"></i><i style="position:absolute;left:0;top:96px;width:37px;height:2px;background:#27507a"></i><i style="position:absolute;left:0;top:98px;width:34px;height:2px;background:#27507a"></i><i style="position:absolute;left:0;top:100px;width:27px;height:2px;background:#27507a"></i><i style="position:absolute;left:0;top:102px;width:9px;height:2px;background:#27507a"></i><i style="position:absolute;left:0;top:104px;width:37px;height:2px;background:#27507a"></i><i style="position:absolute;left:0;top:106px;width:37px;height:2px;background:#27507a"></i><i style="position:absolute;left:0;top:108px;width:37px;height:2px;background:#27507a"></i><i style="position:absolute;left:0;top:110px;width:37px;height:2px;background:#27507a"></i><i style="position:absolute;left:0;top:112px;width:14px;height:2px;background:#27507a"></i><i style="position:absolute;left:0;top:114px;width:37px;height:2px;background:#27507a"></i><i style="position:absolute;left:0;top:116px;width:9px;height:2px;background:#27507a"></i><i style="position:absolute;left:0;top:118px;width:28px;height:2px;background:#27507a"></i><i style="position:absolute;left:0;top:120px;width:23px;height:2px;background:#27507a"></i><i style="position:absolute;left:0;top:122px;width:5px;height:2px;background:#27507a"></i><i style="position:absolute;left:0;top:126px;width:27px;height:2px;background:#27507a"></i><i style="position:absolute;left:0;top:128px;width:37px;height:2px;background:#27507a"></i><i style="position:absolute;left:0;top:130px;width:32px;height:2px;background:#27507a"></i><i style="position:absolute;left:0;top:132px;width:37px;height:2px;background:#27507a"></i><i style="position:absolute;left:0;top:134px;width:14px;height:2px;background:#27507a"></i><i style="position:absolute;left:0;top:136px;width:37px;height:2px;background:#27507a"></i><i style="position:absolute;left:0;top:138px;width:9px;height:2px;background:#27507a"></i><i style="position:absolute;left:0;top:140px;width:37px;height:2px;background:#27507a"></i><i style="position:absolute;left:0;top:142px;width:32px;height:2px;background:#27507a"></i><i style="position:absolute;left:0;top:144px;width:31px;height:2px;background:#27507a"></i><i style="position:absolute;left:0;top:146px;width:37px;height:2px;background:#27507a"></i><i style="position:absolute;left:0;top:148px;width:37px;height:2px;background:#27507a"></i><i style="position:absolute;left:0;top:150px;width:37px;height:2px;background:#27507a"></i><i style="position:absolute;left:0;top:152px;width:37px;height:2px;background:#27507a"></i><i style="position:absolute;left:0;top:154px;width:37px;height:2px;background:#27507a"></i><i style="position:absolute;left:0;top:156px;width:37px;height:2px;background:#27507a"></i><i style="position:absolute;left:0;top:158px;width:14px;height:2px;background:#27507a"></i><i style="position:absolute;left:0;top:160px;width:37px;height:2px;background:#27507a"></i><i style="position:absolute;left:0;top:162px;width:9px;height:2px;background:#27507a"></i><i style="position:absolute;left:0;top:164px;width:30px;height:2px;background:#27507a"></i><i style="position:absolute;left:0;top:166px;width:5px;height:2px;background:#27507a"></i><i style="position:absolute;left:0;top:168px;width:29px;height:2px;background:#27507a"></i><i style="position:absolute;left:0;top:170px;width:37px;height:2px;background:#27507a"></i><i style="position:absolute;left:0;top:172px;width:37px;height:2px;background:#27507a"></i><i style="position:absolute;left:0;top:174px;width:37px;height:2px;background:#27507a"></i><i style="position:absolute;left:0;top:176px;width:32px;height:2px;background:#27507a"></i><i style="position:absolute;left:0;top:178px;width:31px;height:2px;background:#27507a"></i><i style="position:absolute;left:0;top:180px;width:37px;height:2px;background:#27507a"></i><i style="position:absolute;left:0;top:182px;width:37px;height:2px;background:#27507a"></i><i style="position:absolute;left:0;top:184px;width:37px;height:2px;background:#27507a"></i><i style="position:absolute;left:0;top:186px;width:37px;height:2px;background:#27507a"></i><i style="position:absolute;left:0;top:188px;width:18px;height:2px;background:#27507a"></i><i style="position:absolute;left:0;top:190px;width:37px;height:2px;background:#27507a"></i><i style="position:absolute;left:0;top:192px;width:13px;height:2px;background:#27507a"></i><i style="position:absolute;left:0;top:194px;width:32px;height:2px;background:#27507a"></i><i style="position:absolute;left:0;top:196px;width:27px;height:2px;background:#27507a"></i><i style="position:absolute;left:0;top:198px;width:14px;height:2px;background:#27507a"></i><i style="position:absolute;left:0;top:200px;width:37px;height:2px;background:#27507a"></i><i style="position:absolute;left:0;top:202px;width:32px;height:2px;background:#27507a"></i><i style="position:absolute;left:0;top:204px;width:27px;height:2px;background:#27507a"></i><i style="position:absolute;left:0;top:206px;width:9px;height:2px;background:#27507a"></i><i style="position:absolute;left:0;top:208px;width:5px;height:2px;background:#27507a"></i><i style="position:absolute;left:0;top:212px;width:29px;height:2px;background:#27507a"></i><i style="position:absolute;left:0;top:214px;width:37px;height:2px;background:#27507a"></i><i style="position:absolute;left:0;top:216px;width:37px;height:2px;background:#27507a"></i><i style="position:absolute;left:0;top:218px;width:37px;height:2px;background:#27507a"></i><i style="position:absolute;left:0;top:220px;width:32px;height:2px;background:#27507a"></i><i style="position:absolute;left:0;top:222px;width:31px;height:2px;background:#27507a"></i><i style="position:absolute;left:0;top:224px;width:26px;height:2px;background:#27507a"></i><i style="position:absolute;left:0;top:226px;width:37px;height:2px;background:#27507a"></i><i style="position:absolute;left:0;top:228px;width:37px;height:2px;background:#27507a"></i><i style="position:absolute;left:0;top:230px;width:18px;height:2px;background:#27507a"></i><i style="position:absolute;left:0;top:232px;width:37px;height:2px;background:#27507a"></i><i style="position:absolute;left:0;top:234px;width:13px;height:2px;background:#27507a"></i><i style="position:absolute;left:0;top:236px;width:14px;height:2px;background:#27507a"></i><i style="position:absolute;left:0;top:238px;width:37px;height:2px;background:#27507a"></i><i style="position:absolute;left:0;top:240px;width:37px;height:2px;background:#27507a"></i><i style="position:absolute;left:0;top:242px;width:18px;height:2px;background:#27507a"></i><i style="position:absolute;left:0;top:244px;width:37px;height:2px;background:#27507a"></i><i style="position:absolute;left:0;top:246px;width:13px;height:2px;background:#27507a"></i><i style="position:absolute;left:0;top:248px;width:9px;height:2px;background:#27507a"></i><i style="position:absolute;left:0;top:250px;width:5px;height:2px;background:#27507a"></i><i style="position:absolute;left:0;top:254px;width:29px;height:2px;background:#27507a"></i><i style="position:absolute;left:0;top:256px;width:37px;height:2px;background:#27507a"></i><i style="position:absolute;left:0;top:258px;width:37px;height:2px;background:#27507a"></i><i style="position:absolute;left:0;top:260px;width:33px;height:2px;background:#27507a"></i><i style="position:absolute;left:0;top:262px;width:30px;height:2px;background:#27507a"></i><i style="position:absolute;left:0;top:264px;width:20px;height:2px;background:#27507a"></i><i style="position:absolute;left:0;top:266px;width:36px;height:2px;background:#27507a"></i><i style="position:absolute;left:0;top:268px;width:37px;height:2px;background:#27507a"></i><i style="position:absolute;left:0;top:270px;width:14px;height:2px;background:#27507a"></i><i style="position:absolute;left:0;top:272px;width:25px;height:2px;background:#27507a"></i><i style="position:absolute;left:0;top:274px;width:9px;height:2px;background:#27507a"></i><i style="position:absolute;left:0;top:276px;width:37px;height:2px;background:#27507a"></i><i style="position:absolute;left:0;top:278px;width:37px;height:2px;background:#27507a"></i><i style="position:absolute;left:0;top:280px;width:33px;height:2px;background:#27507a"></i><i style="position:absolute;left:0;top:282px;width:25px;height:2px;background:#27507a"></i><i style="position:absolute;left:0;top:284px;width:37px;height:2px;background:#27507a"></i><i style="position:absolute;left:0;top:286px;width:37px;height:2px;background:#27507a"></i><i style="position:absolute;left:0;top:288px;width:30px;height:2px;background:#27507a"></i><i style="position:absolute;left:0;top:290px;width:37px;height:2px;background:#27507a"></i><i style="position:absolute;left:0;top:292px;width:37px;height:2px;background:#27507a"></i><i style="position:absolute;left:0;top:294px;width:37px;height:2px;background:#27507a"></i><i style="position:absolute;left:0;top:296px;width:18px;height:2px;background:#27507a"></i><i style="position:absolute;left:0;top:298px;width:37px;height:2px;background:#27507a"></i><i style="position:absolute;left:0;top:300px;width:37px;height:2px;background:#27507a"></i><i style="position:absolute;left:0;top:302px;width:37px;height:2px;background:#27507a"></i><i style="position:absolute;left:0;top:304px;width:37px;height:2px;background:#27507a"></i><i style="position:absolute;left:0;top:306px;width:13px;height:2px;background:#27507a"></i><i style="position:absolute;left:0;top:308px;width:9px;height:2px;background:#27507a"></i><i style="position:absolute;left:0;top:310px;width:37px;height:2px;background:#27507a"></i><i style="position:absolute;left:0;top:312px;width:37px;height:2px;background:#27507a"></i><i style="position:absolute;left:0;top:314px;width:37px;height:2px;background:#27507a"></i><i style="position:absolute;left:0;top:316px;width:37px;height:2px;background:#27507a"></i><i style="position:absolute;left:0;top:318px;width:30px;height:2px;background:#27507a"></i><i style="position:absolute;left:0;top:320px;width:5px;height:2px;background:#27507a"></i><i style="position:absolute;left:0;top:322px;width:29px;height:2px;background:#27507a"></i><i style="position:absolute;left:0;top:324px;width:37px;height:2px;background:#27507a"></i><i style="position:absolute;left:0;top:326px;width:37px;height:2px;background:#27507a"></i><i style="position:absolute;left:0;top:328px;width:31px;height:2px;background:#27507a"></i><i style="position:absolute;left:0;top:330px;width:37px;height:2px;background:#27507a"></i><i style="position:absolute;left:0;top:334px;width:37px;height:2px;background:#27507a"></i><i style="position:absolute;left:0;top:336px;width:32px;height:2px;background:#27507a"></i><i style="position:absolute;left:0;top:338px;width:27px;height:2px;background:#27507a"></i><i style="position:absolute;left:0;top:340px;width:14px;height:2px;background:#27507a"></i><i style="position:absolute;left:0;top:342px;width:37px;height:2px;background:#27507a"></i><i style="position:absolute;left:0;top:344px;width:32px;height:2px;background:#27507a"></i><i style="position:absolute;left:0;top:346px;width:27px;height:2px;background:#27507a"></i><i style="position:absolute;left:0;top:348px;width:9px;height:2px;background:#27507a"></i><i style="position:absolute;left:0;top:350px;width:5px;height:2px;background:#27507a"></i><i style="position:absolute;left:0;top:352px;width:1px;height:2px;background:#27507a"></i><i style="position:absolute;left:4px;top:8px;width:33px;height:2px;background:#cca700"></i><i style="position:absolute;left:13px;top:10px;width:10px;height:2px;background:#cca700"></i><i style="position:absolute;left:16px;top:304px;width:2px;height:2px;background:#e0b400"></i></div>
</div>
<div class="abs" style="left:822px;top:0;width:2px;height:928px;background:#2b2b2b"></div>
<div id="status">
<svg style="left:-14.5px;top:7px" width="18" height="18" viewBox="0 0 18 18"><circle cx="9" cy="9" r="7.500" stroke="#cccccc" stroke-width="1.500" fill="none"/></svg>
<div class="t" style="left:8px;letter-spacing:0px">0</div>
<svg style="left:23.500px;top:6.500px" width="19" height="18" viewBox="0 0 19 18"><path d="M9.500 1.300L1 16.700h17z" stroke="#cccccc" stroke-width="1.500" fill="none" stroke-linejoin="round"/><path d="M9.500 6.500v5.500M9.500 13.300v1.800" stroke="#cccccc" stroke-width="1.500"/></svg>
<div class="t" style="left:48.5px;letter-spacing:0px">5</div>
<svg style="left:84px;top:6px" width="19" height="19" viewBox="0 0 19 19" fill="none" stroke="#cccccc" stroke-width="1.400"><path d="M4.800 18L9.500 6.500 14.200 18M6.300 14.500h6.400"/><circle cx="9.500" cy="5.800" r="1.600"/><path d="M5.600 1.800a5.500 5.500 0 0 0 0 8M13.400 1.800a5.500 5.500 0 0 1 0 8M3 .5a8.300 8.300 0 0 0 0 10.600M16 .5a8.300 8.300 0 0 1 0 10.600"/></svg>
<div class="t" style="left:108px;letter-spacing:0px">0</div>
<div class="t" style="left:142px;letter-spacing:-0.2px">SonarLint focus: new code</div>
<div class="t" style="left:1019px;letter-spacing:-0.32px">Ln 177, Col 2 (6514 selected)</div>
<div class="t" style="left:1270px;letter-spacing:-0.78px">Spaces: 4</div>
<div class="t" style="left:1367px;letter-spacing:-0.8px">UTF-8</div>
<div class="t" style="left:1439px;letter-spacing:-0.8px">LF</div>
<div class="t" style="left:1480px;letter-spacing:-1.6px">PHP</div>
<svg style="left:1537.7px;top:9.700px" width="22" height="17" viewBox="0 0 22 17"><path d="M5.400 0H21.500V4H10.400V8H5.400zM0 8H5.400V12.400H0zM9.700 8H21.500V12.400H15.100V16.100H9.700z" fill="#d0d0d0"/></svg>
<svg style="left:1585px;top:5.7px" width="22.5" height="21.75" viewBox="0 0 30 29"><path d="M10.0 0.2L15.6 0.2L17.2 2.1L25.8 2.1L27.8 6.2L25.8 10.3L29.9 17.3L27.8 21.4L23.3 21.4L19.6 28.8L14.3 28.8L12.3 24.7L4.9 25.1L2.0 20.6L4.1 16.9L0 10.3L2.4 6.2L6.9 6.2Z" fill="#d0d0d0"/><path d="M11.6 0.2L7.9 8.3L26.6 8.3" stroke="#181818" stroke-width="1.8" fill="none" stroke-linejoin="miter"/><path d="M4.1 7.9L14.1 26.2L23.3 11.6L28.2 16.9" stroke="#181818" stroke-width="1.8" fill="none" stroke-linejoin="miter"/><path d="M5.3 24.0L12.6 21.6" stroke="#181818" stroke-width="1.8" fill="none" stroke-linejoin="miter"/></svg>
</div>
<div id="task">
<div class="abs" style="left:264px;top:0.5px;width:54.5px;height:15px;background:#313131"></div>
<div class="abs" style="left:-6px;top:9.5px;width:20px;height:20px;border:2.6px solid #fff;border-radius:50%"></div>
<div class="abs" style="left:51px;top:13px;width:23px;height:4px;background:#c8c8c8"></div>
<div class="abs" style="left:108px;top:13px;width:7px;height:4px;background:#f0b400"></div>
<div class="abs" style="left:165.5px;top:10px;width:22px;height:22px;border-radius:50%;background:#19b6c9"></div>
<div class="abs" style="left:231.5px;top:11.5px;width:10px;height:10px;background:#f2d21b;transform:rotate(45deg)"></div>
<div class="abs" style="left:289px;top:11px;width:16px;height:16px;background:#1f8ad8;transform:rotate(45deg)"></div>
<div class="abs" style="left:1403.5px;top:12.5px;width:4.5px;height:3px;background:#2f6fe0"></div><div class="abs" style="left:1420px;top:12.5px;width:5px;height:3px;background:#f0b400"></div>
<div class="abs" style="left:1455.5px;top:12px;width:14.5px;height:6px;background:#e8e8e8;border-radius:4px 4px 0 0"></div>
<div class="abs" style="left:1499px;top:13px;width:23px;height:3px;background:#e0e0e0"></div>
<div class="abs" style="left:1555.5px;top:14px;width:2px;height:2px;background:#d0d0d0"></div>
<div class="abs" style="left:1598.2px;top:10px;width:2.2px;height:6px;background:#f0f0f0"></div>
</div>
<div class="abs" style="left:0;top:0;width:1629px;height:976px;opacity:.2;pointer-events:none"><svg style="left:0;top:0" width="1629" height="976" viewBox="0 0 1629 976"><path d="M615.400 464.600L646.100 454.900L631.800 492.300L649.200 489.200L629.700 522Q620 508 616.400 497.400Z" fill="#c4c4c4"/><path d="M665.600 460L682 464.600L682 497.400Q678 513 657.400 524L644 527L635.900 522L670.700 475.300L658.400 475.900Z" fill="#c4c4c4"/></svg><div class="t" style="left:706px;top:465.5px;font-size:43px;font-weight:500;-webkit-text-stroke:0.6px #c4c4c4;color:#c4c4c4;letter-spacing:0.2px;font-family:'Liberation Sans','Noto Sans CJK SC',sans-serif">奇安信攻防社区</div></div>
<div class="t" style="left:1324px;top:848.5px;font-size:29.5px;color:rgba(225,225,225,.55)">激活<span style="letter-spacing:2px;margin-left:3px"> Windows</span></div>
<div class="t" style="left:1325px;top:888.5px;font-size:21.5px;color:rgba(225,225,225,.55)">转到<span style="margin:0 1px 0 0">“</span>设置<span style="margin:0 1px 0 1px">”</span>以激活<span style="letter-spacing:1.2px;margin-left:3px"> Windows</span>。</div>
</body></html>
